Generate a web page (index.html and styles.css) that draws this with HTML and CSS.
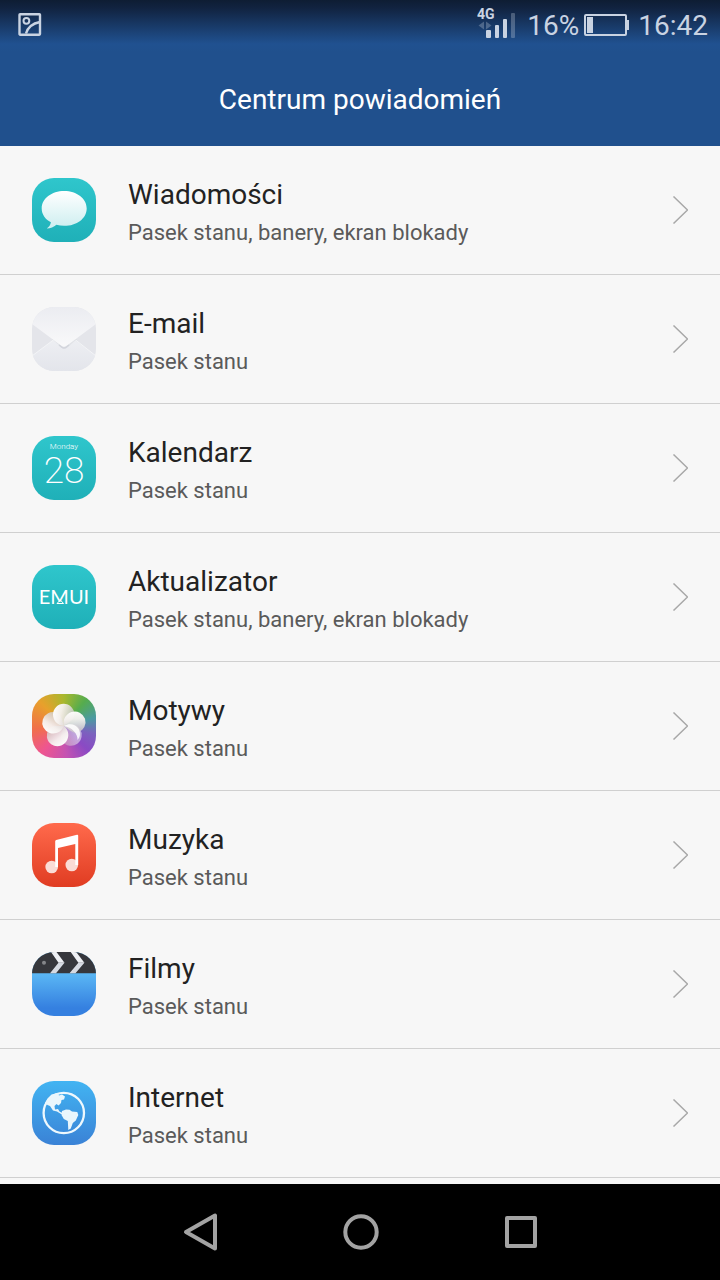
FILE: index.html
```html
<!DOCTYPE html>
<html lang="pl">
<head>
    <meta charset="UTF-8">
    <meta name="viewport" content="width=device-width, initial-scale=1">
    <title>Centrum powiadomień</title>
    <link rel="stylesheet" href="styles.css">
</head>
<body>
    <header class="header">
        <div class="status-bar">
            <svg class="status-picture" width="24" height="24" viewBox="0 0 24 24" fill="none" stroke="currentColor" stroke-width="2.4">
                <rect x="1.500" y="1.200" width="20.5" height="20.5" rx="0.6"/>
                <circle cx="8.4" cy="7.8" r="2.9" stroke-width="2"/>
                <path d="M8 20.500c1.600-5.500 6-10 14-11.500"/>
            </svg>
            <div class="status-right">
                <svg class="signal" width="40" height="32" viewBox="0 0 40 32" fill="currentColor">
                    <text class="signal-type" x="0" y="13">4G</text>
                    <path d="M7 15.500v8l-5.500-4zM9 15.500v8l5.500-4z" opacity="0.3"/>
                    <rect x="9" y="24" width="5" height="8" rx="1"/>
                    <rect x="18" y="19" width="4" height="13" rx="1"/>
                    <rect x="26" y="13" width="4" height="19" rx="1"/>
                    <rect x="34" y="7" width="4" height="25" rx="1" opacity="0.3"/>
                </svg>
                <span class="battery-level">16%</span>
                <svg class="battery" width="46" height="22" viewBox="0 0 46 22" fill="currentColor">
                    <rect x="1" y="1" width="41" height="20" rx="1" fill="none" stroke="currentColor" stroke-width="2"/>
                    <rect x="3" y="3" width="6" height="16"/>
                    <path d="M43 6h2v10h-2z"/>
                </svg>
                <time class="clock">16:42</time>
            </div>
        </div>
        <h1 class="title">Centrum powiadomień</h1>
    </header>

    <main class="content">
        <ul class="app-list">
            <li>
                <a class="app" href="#messages">
                    <svg class="app-icon teal" viewBox="0 0 64 64">
                        <defs>
                            <linearGradient id="bubble" x1="0" y1="0" x2="0" y2="1">
                                <stop offset="0" stop-color="#fff"/>
                                <stop offset="1" stop-color="#cdeef0"/>
                            </linearGradient>
                        </defs>
                        <path fill="url(#bubble)" d="M32.200 13C44.800 13 54.700 20.500 54.700 30.400S44.800 47.800 32.200 47.800c-2.800 0-5.400-.4-7.800-1.100-2.600 2.200-5.800 3.700-9.700 3.700 2.200-1.300 3.700-3.200 4.200-6.200C13.200 41.200 9.700 36.200 9.700 30.400 9.700 20.500 19.600 13 32.200 13z"/>
                    </svg>
                    <span class="app-text">
                        <span class="app-name">Wiadomości</span>
                        <span class="app-info">Pasek stanu, banery, ekran blokady</span>
                    </span>
                    <svg class="chevron" width="16" height="28" viewBox="0 0 16 28"><path d="M1.500 0.500L15.500 14l-14 13.500"/></svg>
                </a>
            </li>
            <li>
                <a class="app" href="#email">
                    <svg class="app-icon mail" viewBox="0 0 64 64">
                        <defs>
                            <linearGradient id="flap" x1="0" y1="0" x2="0" y2="1">
                                <stop offset="0" stop-color="#ebecf1"/>
                                <stop offset="1" stop-color="#f9f9fa"/>
                            </linearGradient>
                            <linearGradient id="fold" x1="0" y1="0" x2="0" y2="1">
                                <stop offset="0" stop-color="#eeeff3"/>
                                <stop offset="1" stop-color="#e3e5eb"/>
                            </linearGradient>
                        </defs>
                        <path fill="url(#fold)" d="M0 49L24 31h16l24 18v15H0z"/>
                        <path fill="none" stroke="#f3f4f6" d="M0 49L22 32.500M64 49L43 32.500"/>
                        <path fill="#cfd1d8" opacity="0.400" d="M20 32l9 8q3.500 3 7 0l9-8z"/>
                        <path fill="url(#flap)" d="M0 0h64v17L35 38.500q-3 2.500-6 0L0 17z"/>
                        <path fill="none" stroke="#d3d5dc" stroke-width="1.500" d="M27 38l2.500 2q2.500 2 5 0l2.500-2"/>
                    </svg>
                    <span class="app-text">
                        <span class="app-name">E-mail</span>
                        <span class="app-info">Pasek stanu</span>
                    </span>
                    <svg class="chevron" width="16" height="28" viewBox="0 0 16 28"><path d="M1.500 0.500L15.500 14l-14 13.500"/></svg>
                </a>
            </li>
            <li>
                <a class="app" href="#calendar">
                    <span class="app-icon teal calendar">
                        <span class="calendar-day">Monday</span>
                        <span class="calendar-date">28</span>
                    </span>
                    <span class="app-text">
                        <span class="app-name">Kalendarz</span>
                        <span class="app-info">Pasek stanu</span>
                    </span>
                    <svg class="chevron" width="16" height="28" viewBox="0 0 16 28"><path d="M1.500 0.500L15.500 14l-14 13.500"/></svg>
                </a>
            </li>
            <li>
                <a class="app" href="#updater">
                    <svg class="app-icon teal" viewBox="0 0 64 64">
                        <text class="emui" x="32" y="39" text-anchor="middle">EMUI</text>
                        <path d="M25 38.500l3.300-3.500 3.300 3.500z" fill="none" stroke="#fff"/>
                    </svg>
                    <span class="app-text">
                        <span class="app-name">Aktualizator</span>
                        <span class="app-info">Pasek stanu, banery, ekran blokady</span>
                    </span>
                    <svg class="chevron" width="16" height="28" viewBox="0 0 16 28"><path d="M1.500 0.500L15.500 14l-14 13.500"/></svg>
                </a>
            </li>
            <li>
                <a class="app" href="#themes">
                    <svg class="app-icon themes" viewBox="0 0 64 64">
                        <defs>
                            <linearGradient id="petal" x1="0" y1="0" x2="1" y2="0.300">
                                <stop offset="0" stop-color="#fff"/>
                                <stop offset="0.450" stop-color="#f6f2f0" stop-opacity="0.950"/>
                                <stop offset="1" stop-color="#d2cdcd" stop-opacity="0.800"/>
                            </linearGradient>
                            <path id="blade" fill="url(#petal)" d="M32 32C25 31.500 21 26 21 20.500a10.700 10.700 0 0 1 21.400 0C42.400 26 37 28 32 32z"/>
                        </defs>
                        <use href="#blade" transform="rotate(144 32 32)" opacity="0.550"/>
                        <use href="#blade" transform="rotate(216 32 32)"/>
                        <use href="#blade" transform="rotate(288 32 32)"/>
                        <use href="#blade"/>
                        <use href="#blade" transform="rotate(72 32 32)"/>
                        <path fill="#fff" opacity="0.850" d="M32 32c5-3 11-2 14 2s2.500 9-.5 12C46 40 40 33 32 32z"/>
                    </svg>
                    <span class="app-text">
                        <span class="app-name">Motywy</span>
                        <span class="app-info">Pasek stanu</span>
                    </span>
                    <svg class="chevron" width="16" height="28" viewBox="0 0 16 28"><path d="M1.500 0.500L15.500 14l-14 13.500"/></svg>
                </a>
            </li>
            <li>
                <a class="app" href="#music">
                    <svg class="app-icon music" viewBox="0 0 64 64">
                        <g fill="#fadcd6">
                            <circle cx="19.700" cy="44" r="6.300"/>
                            <circle cx="39.800" cy="42" r="6.300"/>
                        </g>
                        <path fill="#fff" d="M23.200 18.200q0-1 1-1.200L45 11.800q1.200-.3 1.200 1V42h-2.900V21L26 25v19h-2.800z"/>
                    </svg>
                    <span class="app-text">
                        <span class="app-name">Muzyka</span>
                        <span class="app-info">Pasek stanu</span>
                    </span>
                    <svg class="chevron" width="16" height="28" viewBox="0 0 16 28"><path d="M1.500 0.500L15.500 14l-14 13.500"/></svg>
                </a>
            </li>
            <li>
                <a class="app" href="#movies">
                    <svg class="app-icon movies" viewBox="0 0 64 64">
                        <path fill="#36373c" d="M0 0h64v21.300H0z"/>
                        <circle cx="12" cy="10.700" r="2" fill="#85868a"/>
                        <path fill="#eef0f4" d="M19 0h5.500l8 10.700h-6zM38.700 0h5.500l8.200 10.700h-6z"/>
                        <path fill="#d6dae2" d="M26.500 10.700h6L24 21.300h-6zM46.400 10.700h6L43.500 21.300h-6z"/>
                    </svg>
                    <span class="app-text">
                        <span class="app-name">Filmy</span>
                        <span class="app-info">Pasek stanu</span>
                    </span>
                    <svg class="chevron" width="16" height="28" viewBox="0 0 16 28"><path d="M1.500 0.500L15.500 14l-14 13.500"/></svg>
                </a>
            </li>
            <li>
                <a class="app" href="#internet">
                    <svg class="app-icon internet" viewBox="0 0 64 64">
                        <circle cx="31.800" cy="32" r="20.200" fill="none" stroke="#eef8fd" stroke-width="2.300"/>
                        <g fill="#eaf6fc">
                            <path d="M13 22l2.500-4.500 4-4 6-1.500 1.500 2.500 3-1 3 2-1 3-2.500.5-.5 3-2.500 2.500-2-1.500-2 2 .5 3.500 3-.5 1.500 2.500 3 1.500 2 .3-.5 1.200-3-.5-4-2.500-4-1-3-4.500-2.500-1z"/>
                            <path d="M30 30l4-1.500 3.500.2 2.500 1.800 5.300.5 1 3-2.500 5.500-3 2.500-2 5.500-2.500 1.500-.5-9-4-2-2.300-4z"/>
                        </g>
                    </svg>
                    <span class="app-text">
                        <span class="app-name">Internet</span>
                        <span class="app-info">Pasek stanu</span>
                    </span>
                    <svg class="chevron" width="16" height="28" viewBox="0 0 16 28"><path d="M1.500 0.500L15.500 14l-14 13.500"/></svg>
                </a>
            </li>
        </ul>
    </main>

    <nav class="nav-bar">
        <button type="button" aria-label="Wstecz">
            <svg width="40" height="40" viewBox="0 0 40 40"><path d="M6 20L35 3.500v33z"/></svg>
        </button>
        <button type="button" aria-label="Ekran główny">
            <svg width="40" height="40" viewBox="0 0 40 40"><circle cx="21" cy="20" r="15.700"/></svg>
        </button>
        <button type="button" aria-label="Ostatnie">
            <svg width="40" height="40" viewBox="0 0 40 40"><rect x="7" y="6" width="28" height="28"/></svg>
        </button>
    </nav>
</body>
</html>
```

FILE: styles.css
```css
body {
    font-family: Roboto, 'Noto Sans', sans-serif;
    color: #222;
    background-color: #F7F7F7;
    margin: 0;
    min-height: 100vh;
    display: flex;
    flex-direction: column;
}
.header {
    color: white;
    background: linear-gradient(#0E1D33 0, #112340 8px, #205190 44px, #20508D 52px);
}
.status-bar {
    display: flex;
    justify-content: space-between;
    align-items: center;
    height: 52px;
    padding: 0 12px 0 18px;
    color: #C9D3E2;
    font-size: 28px;
    line-height: 32px;
}
.status-right {
    display: flex;
    align-items: center;
}
.signal {
    margin: 0 10px 8px 0;
}
.signal-type {
    font-size: 14px;
    font-weight: 700;
}
.battery {
    margin: 0 8px 0 5px;
}
.battery,
.status-picture {
    margin-bottom: 2px;
}
.title {
    margin: 0;
    padding: 29px 16px 27px;
    font-size: 28px;
    font-weight: 400;
    line-height: 38px;
    text-align: center;
}
.content {
    flex: 1;
}
.app-list {
    list-style: none;
    margin: 0;
    padding: 0;
}
.app-list li {
    border-bottom: 1px solid #D0D0D0;
}
.app {
    display: flex;
    align-items: center;
    padding: 26px 32px;
    color: inherit;
    text-decoration: none;
}
.app-icon {
    flex: none;
    width: 64px;
    height: 64px;
    margin-right: 32px;
    border-radius: 22px;
    overflow: hidden;
}
.app-text {
    flex: 1;
    padding-top: 4px;
    margin-bottom: -4px;
}
.app-name,
.app-info {
    display: block;
    line-height: 38px;
}
.app-name {
    font-size: 28px;
}
.app-info {
    font-size: 22px;
    color: #5A5A5A;
}
.chevron {
    fill: none;
    stroke: #A8A8A8;
    stroke-width: 1.5;
}
.teal {
    background: linear-gradient(#2FC6CC, #1FB0B8);
}
.mail {
    background: #E4E5EA;
}
.calendar {
    display: flex;
    flex-direction: column;
    align-items: center;
    color: white;
}
.calendar-day {
    margin-top: 5px;
    font-size: 8px;
    font-weight: 300;
    line-height: 12px;
}
.calendar-date {
    font-size: 37px;
    font-weight: 200;
    line-height: 36px;
}
.emui {
    font-family: Lato, sans-serif;
    font-size: 20px;
    fill: white;
}
.themes {
    background: conic-gradient(#A8B82E, #55AC4E 40deg, #4B9AA2 75deg, #7B62BE 105deg, #8A4AC4 135deg, #C452B2 175deg, #EE5590 220deg, #F0704A 265deg, #E8A02C 315deg, #A8B82E);
}
.music {
    background: linear-gradient(#FF6A4C, #E03C22);
}
.movies {
    background: linear-gradient(#5BB8F5 21px, #3580E0 56px);
}
.internet {
    background: linear-gradient(#42B4F2, #3A82D6);
}
.nav-bar {
    display: flex;
    justify-content: center;
    background: black;
}
.nav-bar button {
    width: 160px;
    height: 96px;
    padding: 0;
    border: none;
    background: none;
    cursor: pointer;
}
.nav-bar svg {
    display: block;
    margin: 0 auto;
    fill: none;
    stroke: #A3A3A3;
    stroke-width: 4;
    stroke-linejoin: round;
}
```
